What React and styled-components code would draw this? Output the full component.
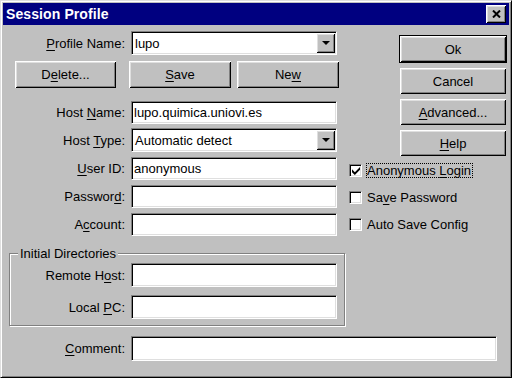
import styled, { createGlobalStyle } from 'styled-components'

const GlobalStyle = createGlobalStyle`
  html, body {
    margin: 0;
    padding: 0;
    background: #c0c0c0;
  }
  body {
    font-family: 'Liberation Sans', Arial, sans-serif;
    font-size: 13px;
    color: #000;
  }
`

const raised = `
  background: #c0c0c0;
  box-shadow: inset 1px 1px #fff, inset -1px -1px #000, inset 2px 2px #dfdfdf, inset -2px -2px #808080;
`

const Window = styled.div`
  width: 512px;
  height: 378px;
  box-sizing: border-box;
  background: #c0c0c0;
  border: 1px solid;
  border-color: #dfdfdf #000 #000 #dfdfdf;
  box-shadow: inset 1px 1px #fff, inset -1px -1px #808080;
  padding: 2px;
  display: flex;
  flex-direction: column;
`

const TitleBar = styled.div`
  height: 22px;
  background: #000080;
  display: flex;
  align-items: center;
  justify-content: space-between;
  padding: 0 3px;
  flex-shrink: 0;
`

const Title = styled.span`
  color: #fff;
  font-weight: bold;
  font-size: 14px;
  letter-spacing: 0.1px;
`

const CloseButton = styled.div`
  ${raised}
  width: 20px;
  height: 18px;
  display: flex;
  align-items: center;
  justify-content: center;
`

const Body = styled.div`
  display: flex;
  flex-direction: column;
  padding: 4px 0 0 6px;
`

const Main = styled.div`
  display: flex;
  gap: 4px;
`

const LeftCol = styled.div`
  width: 336px;
  display: flex;
  flex-direction: column;
`

const RightCol = styled.div`
  width: 160px;
  display: flex;
  flex-direction: column;
  padding: 6px 2px 0 0;
  box-sizing: border-box;
`

const FieldRow = styled.div`
  display: flex;
  align-items: center;
  height: ${p => p.$h || 28}px;
`

const Label = styled.label`
  width: ${p => p.$w || 122}px;
  box-sizing: border-box;
  padding-right: 6px;
  text-align: right;
  white-space: nowrap;
`

const U = styled.span`
  text-decoration: underline;
  text-underline-offset: 2px;
`

const Field = styled.input`
  width: ${p => p.$w || 206}px;
  height: ${p => p.$h || 23}px;
  box-sizing: border-box;
  margin: 0;
  border: 1px solid;
  border-color: #808080 #fff #fff #808080;
  box-shadow: inset 1px 1px #000, inset -1px -1px #dfdfdf;
  background: #fff;
  font: inherit;
  color: #000;
  padding: 0 2px;
  outline: none;
`

const Combo = styled.div`
  width: 206px;
  height: 24px;
  box-sizing: border-box;
  border: 1px solid;
  border-color: #808080 #fff #fff #808080;
  box-shadow: inset 1px 1px #000, inset -1px -1px #dfdfdf;
  background: #fff;
  padding: 1px;
  display: flex;
  align-items: center;
`

const ComboText = styled.span`
  flex: 1;
  padding-left: 2px;
`

const DropButton = styled.div`
  ${raised}
  width: 19px;
  height: 20px;
  display: flex;
  align-items: center;
  justify-content: center;
`

const ButtonRow = styled.div`
  display: flex;
  height: 27px;
  margin: 4px 0 10px;
  padding-left: 6px;
`

const PushButton = styled.div`
  ${raised}
  box-sizing: border-box;
  width: ${p => p.$w}px;
  height: ${p => p.$h || 26}px;
  margin-right: ${p => p.$mr || 0}px;
  display: flex;
  align-items: center;
  justify-content: center;
  white-space: pre;
  ${p => p.$default && `
    border: 1px solid #000;
  `}
`

const ButtonStack = styled.div`
  display: flex;
  flex-direction: column;
  align-items: flex-end;
  gap: 5px;
  margin-bottom: 1px;
`

const CheckRow = styled.div`
  display: flex;
  align-items: center;
  height: 27px;
`

const CheckBox = styled.div`
  width: 13px;
  height: 13px;
  box-sizing: border-box;
  border: 1px solid;
  border-color: #808080 #fff #fff #808080;
  box-shadow: inset 1px 1px #000, inset -1px -1px #dfdfdf;
  background: #fff;
  display: flex;
  align-items: center;
  justify-content: center;
  flex-shrink: 0;
`

const CheckText = styled.span`
  display: inline-block;
  margin-left: 4px;
  padding: 0 1px 0 0;
  border: 1px dotted ${p => (p.$focus ? '#000' : 'transparent')};
  line-height: 13px;
  white-space: pre;
`

const Group = styled.fieldset`
  margin: 10px 0 0 0;
  padding: 0 0 2px;
  width: 336px;
  box-sizing: border-box;
  border: 1px solid #808080;
  box-shadow: inset 1px 1px #fff, 1px 1px #fff;
`

const Legend = styled.legend`
  margin-left: 8px;
  padding: 0 2px;
  background: #c0c0c0;
  line-height: 11px;
`

const CommentRow = styled(FieldRow)`
  margin-top: 8px;
`

const Check = () => (
  <svg width="8" height="8" viewBox="0 0 7 7">
    <polygon points="0,2 2.5,4.5 7,0 7,2.5 2.5,7 0,4.5" fill="#000" />
  </svg>
)

const Arrow = () => (
  <svg width="8" height="4" viewBox="0 0 8 4">
    <polygon points="0,0 8,0 4,4" fill="#000" />
  </svg>
)

function Checkbox({ checked, focus, children }) {
  return (
    <CheckRow>
      <CheckBox>{checked && <Check />}</CheckBox>
      <CheckText $focus={focus}>{children}</CheckText>
    </CheckRow>
  )
}

export default function App() {
  return (
    <>
      <GlobalStyle />
      <Window>
        <TitleBar>
          <Title>Session Profile</Title>
          <CloseButton>
            <svg width="9" height="8" viewBox="0 0 9 8">
              <path d="M1 0.5 L8 7.5 M8 0.5 L1 7.5" stroke="#000" strokeWidth="2" />
            </svg>
          </CloseButton>
        </TitleBar>
        <Body>
          <Main>
            <LeftCol>
              <FieldRow>
                <Label><U>P</U>rofile Name:</Label>
                <Combo>
                  <ComboText>lupo</ComboText>
                  <DropButton><Arrow /></DropButton>
                </Combo>
              </FieldRow>
              <ButtonRow>
                <PushButton $w={101} $h={27} $mr={13}>D<U>e</U>lete...</PushButton>
                <PushButton $w={102} $h={27} $mr={6}><U>S</U>ave</PushButton>
                <PushButton $w={102} $h={27}>Ne<U>w</U></PushButton>
              </ButtonRow>
              <FieldRow>
                <Label>Host <U>N</U>ame:</Label>
                <Field defaultValue="lupo.quimica.uniovi.es" />
              </FieldRow>
              <FieldRow>
                <Label>Host <U>T</U>ype:</Label>
                <Combo>
                  <ComboText>Automatic detect</ComboText>
                  <DropButton><Arrow /></DropButton>
                </Combo>
              </FieldRow>
              <FieldRow>
                <Label><U>U</U>ser ID:</Label>
                <Field defaultValue="anonymous" />
              </FieldRow>
              <FieldRow>
                <Label>Passwor<U>d</U>:</Label>
                <Field />
              </FieldRow>
              <FieldRow>
                <Label>A<U>c</U>count:</Label>
                <Field />
              </FieldRow>
            </LeftCol>
            <RightCol>
              <ButtonStack>
                <PushButton $w={108} $h={28} $default>Ok</PushButton>
                <PushButton $w={106} $mr={1}>Cancel</PushButton>
                <PushButton $w={106} $mr={1}><U>A</U>dvanced...</PushButton>
                <PushButton $w={106} $mr={1}><U>H</U>elp</PushButton>
              </ButtonStack>
              <Checkbox checked focus>Anonymous <U>L</U>ogin</Checkbox>
              <Checkbox>Sa<U>v</U>e Password</Checkbox>
              <Checkbox>Auto Save Config</Checkbox>
            </RightCol>
          </Main>
          <Group>
            <Legend>Initial Directories</Legend>
            <FieldRow $h={32}>
              <Label $w={121}>Remote H<U>o</U>st:</Label>
              <Field $h={24} />
            </FieldRow>
            <FieldRow $h={32}>
              <Label $w={121}>Local <U>P</U>C:</Label>
              <Field $h={24} />
            </FieldRow>
          </Group>
          <CommentRow>
            <Label><U>C</U>omment:</Label>
            <Field $w={366} $h={25} />
          </CommentRow>
        </Body>
      </Window>
    </>
  )
}
